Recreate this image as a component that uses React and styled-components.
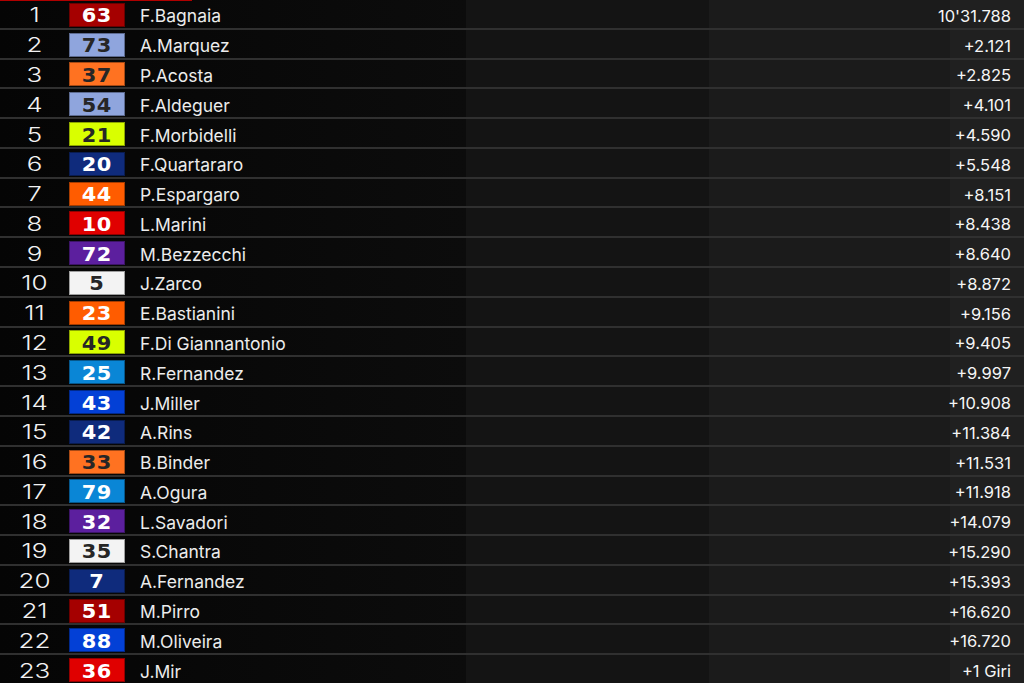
import React from 'react';
import styled, { createGlobalStyle } from 'styled-components';

const GlobalStyle = createGlobalStyle`
  html, body {
    margin: 0;
    padding: 0;
    background: #0a0a0a;
  }
  body {
    font-family: Inter, "Noto Sans", sans-serif;
    overflow: hidden;
  }
`

const COLORS = {
  ducatiDark: { bg: '#a50000', fg: '#ffffff' },
  blueLight: { bg: '#8fa5dd', fg: '#262626' },
  ktm: { bg: '#ff7221', fg: '#262626' },
  ktmRed: { bg: '#ff5c00', fg: '#ffffff' },
  lime: { bg: '#d9ff00', fg: '#262626' },
  navy: { bg: '#0f2b7c', fg: '#ffffff' },
  red: { bg: '#e00000', fg: '#ffffff' },
  purple: { bg: '#5c1f9e', fg: '#ffffff' },
  white: { bg: '#f3f3f3', fg: '#262626' },
  sky: { bg: '#0a86d6', fg: '#ffffff' },
  blue: { bg: '#0340d6', fg: '#ffffff' },
}

const results = [
  { pos: 1, num: 63, team: 'ducatiDark', name: 'F.Bagnaia', time: "10'31.788" },
  { pos: 2, num: 73, team: 'blueLight', name: 'A.Marquez', time: '+2.121' },
  { pos: 3, num: 37, team: 'ktm', name: 'P.Acosta', time: '+2.825' },
  { pos: 4, num: 54, team: 'blueLight', name: 'F.Aldeguer', time: '+4.101' },
  { pos: 5, num: 21, team: 'lime', name: 'F.Morbidelli', time: '+4.590' },
  { pos: 6, num: 20, team: 'navy', name: 'F.Quartararo', time: '+5.548' },
  { pos: 7, num: 44, team: 'ktmRed', name: 'P.Espargaro', time: '+8.151' },
  { pos: 8, num: 10, team: 'red', name: 'L.Marini', time: '+8.438' },
  { pos: 9, num: 72, team: 'purple', name: 'M.Bezzecchi', time: '+8.640' },
  { pos: 10, num: 5, team: 'white', name: 'J.Zarco', time: '+8.872' },
  { pos: 11, num: 23, team: 'ktmRed', name: 'E.Bastianini', time: '+9.156' },
  { pos: 12, num: 49, team: 'lime', name: 'F.Di Giannantonio', time: '+9.405' },
  { pos: 13, num: 25, team: 'sky', name: 'R.Fernandez', time: '+9.997' },
  { pos: 14, num: 43, team: 'blue', name: 'J.Miller', time: '+10.908' },
  { pos: 15, num: 42, team: 'navy', name: 'A.Rins', time: '+11.384' },
  { pos: 16, num: 33, team: 'ktm', name: 'B.Binder', time: '+11.531' },
  { pos: 17, num: 79, team: 'sky', name: 'A.Ogura', time: '+11.918' },
  { pos: 18, num: 32, team: 'purple', name: 'L.Savadori', time: '+14.079' },
  { pos: 19, num: 35, team: 'white', name: 'S.Chantra', time: '+15.290' },
  { pos: 20, num: 7, team: 'navy', name: 'A.Fernandez', time: '+15.393' },
  { pos: 21, num: 51, team: 'ducatiDark', name: 'M.Pirro', time: '+16.620' },
  { pos: 22, num: 88, team: 'blue', name: 'M.Oliveira', time: '+16.720' },
  { pos: 23, num: 36, team: 'red', name: 'J.Mir', time: '+1 Giri' },
]

const Board = styled.div`
  width: 1024px;
  height: 683px;
  display: flex;
  flex-direction: column;
  background: linear-gradient(
    to right,
    #050505 0px,
    #0c0c0c 466px,
    #141414 466px,
    #141414 709px,
    #1b1b1b 709px,
    #1b1b1b 950px,
    #202020 950px
  );
`
const Row = styled.div`
  position: relative;
  flex: 1;
  display: grid;
  grid-template-columns: 69px 56px 1fr auto;
  align-items: center;
  border-bottom: 2px solid #303030;
  &:last-child {
    border-bottom: none;
  }
  &:first-child::before {
    content: '';
    position: absolute;
    left: 0;
    top: 0;
    width: 192px;
    height: 1px;
    background: #b00000;
  }
`
const Position = styled.div`
  text-align: center;
  color: #f2f2f2;
  font-family: Inter, "Noto Sans", sans-serif;
  font-weight: 300;
  font-size: 20px;
  line-height: 1;
  transform: scaleX(1.3);
  padding-top: 3px;
`
const Badge = styled.div`
  height: 24px;
  box-sizing: border-box;
  display: flex;
  align-items: center;
  justify-content: center;
  background: ${p => p.$bg};
  color: ${p => p.$fg};
  border: 1px solid rgba(0, 0, 0, 0.35);
  font-family: "DejaVu Sans", sans-serif;
  font-weight: 700;
  font-size: 19px;
  letter-spacing: 0.5px;
  margin-top: 2px;
  span {
    display: inline-block;
    transform: scaleX(1.1);
    padding-top: 1px;
  }
`
const Name = styled.div`
  padding-left: 15px;
  color: #ececec;
  font-size: 17.5px;
  padding-top: 4px;
`
const Time = styled.div`
  padding-right: 13px;
  color: #f5f5f5;
  font-size: 16.5px;
  text-align: right;
  padding-top: 4px;
`

export default function App() {
  return (
    <>
      <GlobalStyle />
      <Board>
        {results.map(r => {
          const c = COLORS[r.team]
          return (
            <Row key={r.pos}>
              <Position>{r.pos}</Position>
              <Badge $bg={c.bg} $fg={c.fg}><span>{r.num}</span></Badge>
              <Name>{r.name}</Name>
              <Time>{r.time}</Time>
            </Row>
          )
        })}
      </Board>
    </>
  )
}
